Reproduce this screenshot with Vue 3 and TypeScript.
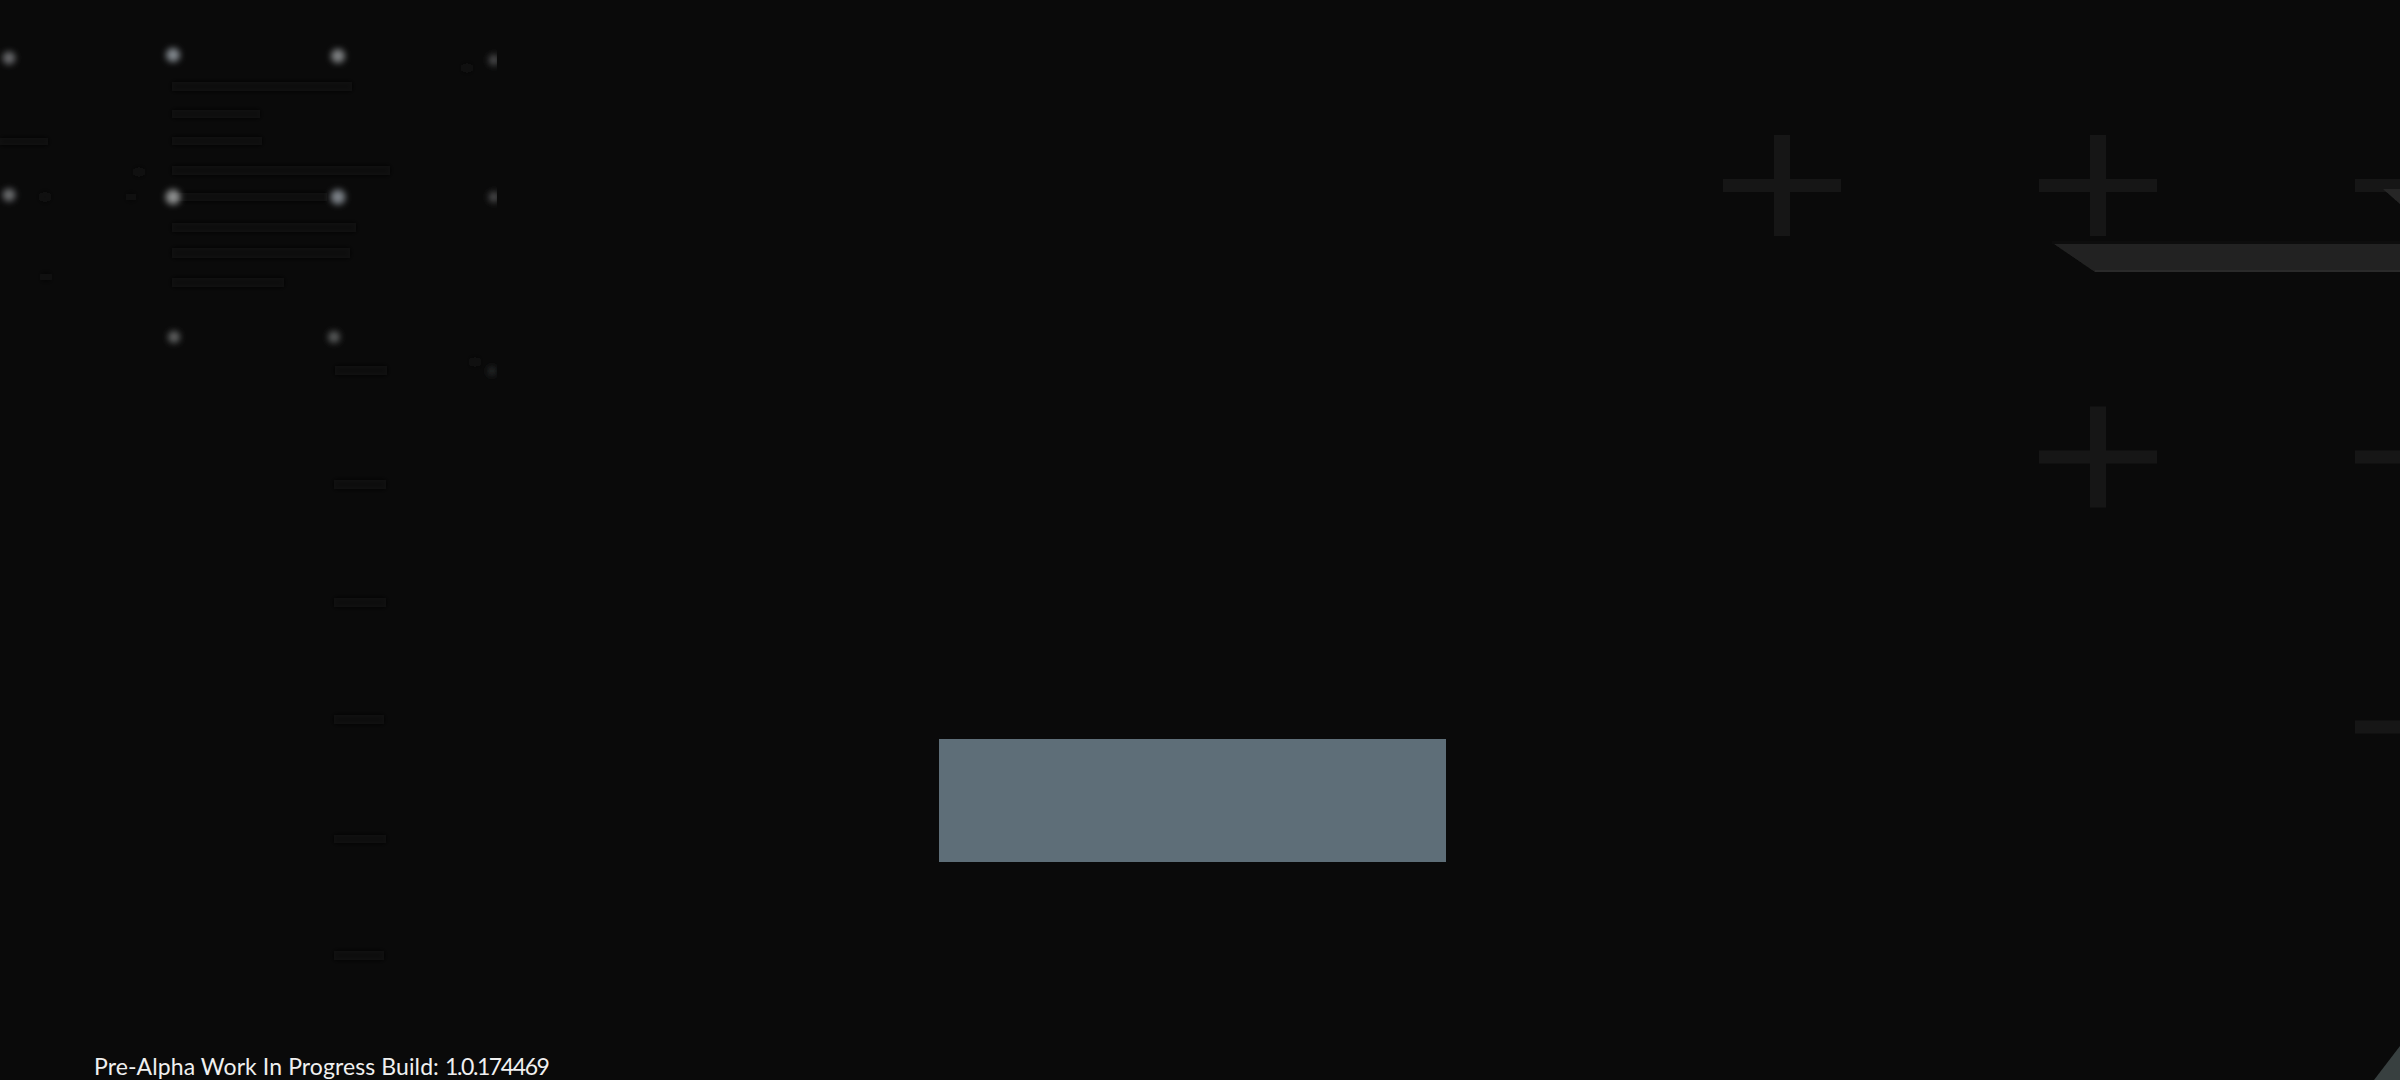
<script setup lang="ts">
interface Dot { x: number; y: number; r: number; c: string }
interface Bar { x: number; y: number; w: number; h: number; c: string }

const crossCols: number[] = [1782, 2098, 2414]
const crosses: { x: number; y: number }[] = [
  { x: crossCols[0], y: 185.5 },
  { x: crossCols[1], y: 185.5 },
  { x: crossCols[2], y: 185.5 },
  { x: crossCols[1], y: 457 },
  { x: crossCols[2], y: 457 },
  { x: crossCols[2], y: 727 },
]

const dots: Dot[] = [
  { x: 9, y: 58, r: 6.5, c: '#66686a' },
  { x: 173, y: 55, r: 7, c: '#80868c' },
  { x: 338, y: 56, r: 7, c: '#7e8082' },
  { x: 494, y: 60, r: 5.5, c: '#484a4c' },
  { x: 9, y: 195, r: 6.5, c: '#6a6c6e' },
  { x: 173, y: 197, r: 7.5, c: '#8c8e8e' },
  { x: 338, y: 197, r: 7.5, c: '#7a8086' },
  { x: 494, y: 197, r: 5.5, c: '#484a4c' },
  { x: 174, y: 337, r: 6, c: '#606262' },
  { x: 334, y: 337, r: 6, c: '#585a5a' },
  { x: 492, y: 371, r: 4.5, c: '#282a2c' },
  { x: 475, y: 362, r: 4, c: '#181919' },
  { x: 467, y: 68, r: 4, c: '#141515' },
  { x: 139, y: 172, r: 4, c: '#151616' },
  { x: 131, y: 197, r: 3.5, c: '#121313' },
  { x: 45, y: 197, r: 4.5, c: '#121313' },
  { x: 46, y: 277, r: 4, c: '#131313' },
]

const bars: Bar[] = [
  { x: 172, y: 82, w: 180, h: 9, c: '#0c0c0c' },
  { x: 172, y: 110, w: 88, h: 8, c: '#0b0b0b' },
  { x: 172, y: 137, w: 90, h: 8, c: '#0b0b0b' },
  { x: 172, y: 166, w: 218, h: 9, c: '#0c0c0c' },
  { x: 172, y: 193, w: 155, h: 8, c: '#0b0b0b' },
  { x: 172, y: 223, w: 184, h: 9, c: '#0c0c0c' },
  { x: 172, y: 248, w: 178, h: 10, c: '#0d0d0d' },
  { x: 172, y: 278, w: 112, h: 9, c: '#0c0c0c' },
  { x: 0, y: 138, w: 48, h: 7, c: '#0b0b0b' },
  { x: 335, y: 366, w: 52, h: 9, c: '#0b0b0b' },
  { x: 334, y: 480, w: 52, h: 9, c: '#0b0b0b' },
  { x: 334, y: 598, w: 52, h: 9, c: '#0b0b0b' },
  { x: 334, y: 715, w: 50, h: 9, c: '#0b0b0b' },
  { x: 334, y: 835, w: 52, h: 8, c: '#0b0b0b' },
  { x: 334, y: 951, w: 50, h: 9, c: '#0b0b0b' },
]
</script>

<template>
  <main class="stage">
    <svg class="decor" width="2400" height="1080" viewBox="0 0 2400 1080" aria-hidden="true">
      <defs>
        <filter id="soft" x="-20%" y="-20%" width="140%" height="140%">
          <feGaussianBlur stdDeviation="0.6" />
        </filter>
        <filter id="spot" x="-100%" y="-100%" width="300%" height="300%">
          <feGaussianBlur stdDeviation="3.2" />
        </filter>
        <filter id="haze" x="-10%" y="-10%" width="120%" height="120%">
          <feGaussianBlur stdDeviation="2.6" />
        </filter>
        <clipPath id="panel">
          <rect x="0" y="0" width="497" height="380" />
        </clipPath>
      </defs>

      <g filter="url(#soft)" fill="#171717">
        <g v-for="(c, i) in crosses" :key="i">
          <rect :x="c.x - 59" :y="c.y - 6.5" width="118" height="13" />
          <rect :x="c.x - 8" :y="c.y - 50.5" width="16" height="101" />
        </g>
      </g>

      <g filter="url(#soft)">
        <rect x="2052" y="241" width="348" height="3" fill="#080808" />
        <polygon points="2054,244 2400,244 2400,272 2095,272" fill="#232423" />
        <rect x="2095" y="270" width="305" height="2" fill="#292a2a" />
        <polygon points="2383,189 2400,189 2400,204" fill="#272828" />
      </g>

      <polygon points="2374,1080 2400,1046 2400,1080" fill="#384040" />

      <g filter="url(#haze)">
        <rect
          v-for="(b, i) in bars"
          :key="'b' + i"
          :x="b.x"
          :y="b.y"
          :width="b.w"
          :height="b.h"
          :fill="b.c"
        />
      </g>

      <g clip-path="url(#panel)">
        <circle
          v-for="(d, i) in dots"
          :key="'d' + i"
          :cx="d.x"
          :cy="d.y"
          :r="d.r"
          :fill="d.c"
          filter="url(#spot)"
        />
      </g>
    </svg>

    <div class="content">
      <div class="action" />
      <p class="build">Pre-Alpha Work In Progress Build: <span class="version">1.0.174469</span></p>
    </div>
  </main>
</template>

<style scoped>
.stage {
  position: relative;
  width: 2400px;
  height: 1080px;
  overflow: hidden;
  background: #0a0a0a;
}
.decor {
  position: absolute;
  inset: 0;
  display: block;
}
.content {
  position: relative;
  display: flex;
  flex-direction: column;
  height: 100%;
  box-sizing: border-box;
  padding: 739px 0 0 94px;
}
.action {
  width: 507px;
  height: 123px;
  margin-left: 845px;
  background: #5e6e78;
}
.build {
  margin: auto 0 0;
  font-family: Lato, "Noto Sans", sans-serif;
  font-size: 23px;
  letter-spacing: 0.1px;
  line-height: 28px;
  color: #f0f0f0;
}
.version {
  letter-spacing: -1.4px;
}
</style>

<style>
html,
body {
  margin: 0;
  background: #0a0a0a;
}
</style>
